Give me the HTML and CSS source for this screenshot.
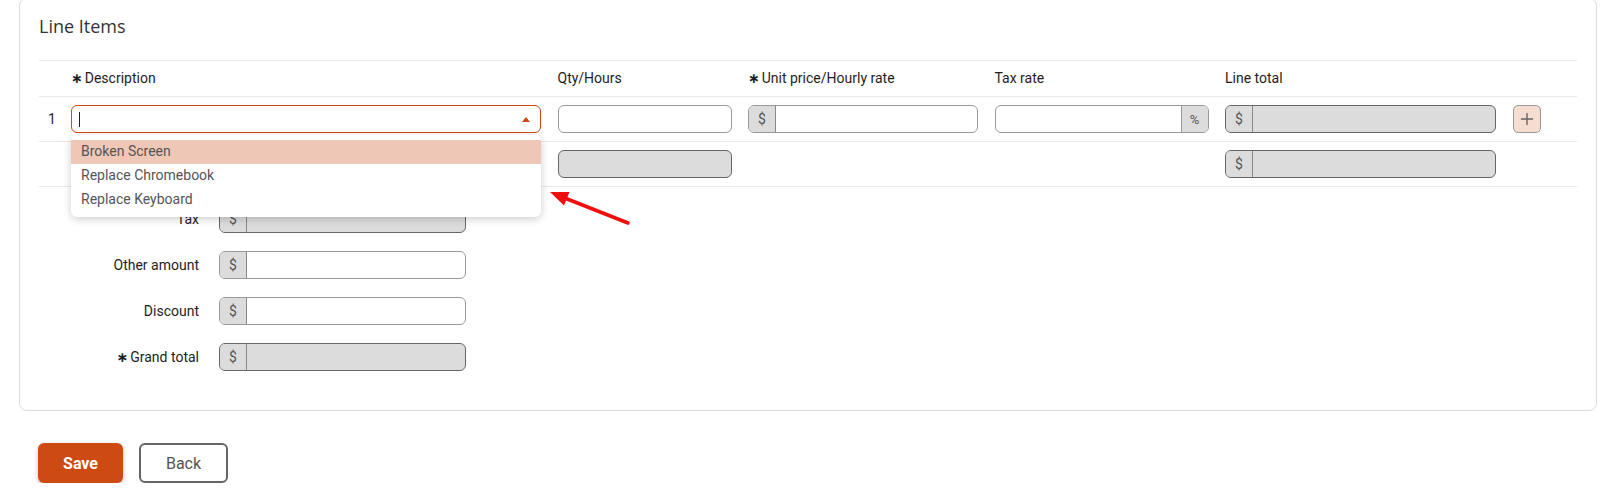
FILE: index.html
```html
<!DOCTYPE html>
<html lang="en">
  <head>
    <meta charset="UTF-8" />
    <meta name="viewport" content="width=device-width, initial-scale=1.0" />
    <title>Line Items</title>

    <link rel="stylesheet" href="styles.css">
  </head>
  <body>
    <main class="page">
      <section class="card">
        <h2 class="card-title">Line Items</h2>

        <div class="items">
          <div class="items-row items-head">
            <span></span>
            <span class="req">Description</span>
            <span>Qty/Hours</span>
            <span class="req">Unit price/Hourly rate</span>
            <span>Tax rate</span>
            <span>Line total</span>
            <span></span>
            <span></span>
          </div>

          <div class="items-row">
            <span class="num">1</span>
            <div class="combo">
              <div class="field field-focus">
                <span class="caret"></span>
                <span class="tri"></span>
              </div>
              <ul class="menu">
                <li class="active">Broken Screen</li>
                <li>Replace Chromebook</li>
                <li>Replace Keyboard</li>
              </ul>
            </div>
            <div class="field"></div>
            <div class="field"><span class="addon">$</span></div>
            <div class="field field-pct"><span class="grow"></span><span class="addon addon-end">%</span></div>
            <div class="field field-ro"><span class="addon">$</span></div>
            <button class="add-btn" type="button">
              <svg width="14" height="14" viewBox="0 0 14 14">
                <path d="M7 1v12M1 7h12" stroke="#666" stroke-width="1.4" fill="none" />
              </svg>
            </button>
            <span></span>
          </div>

          <div class="items-row">
            <span></span>
            <span></span>
            <div class="field field-ro"></div>
            <span></span>
            <span></span>
            <div class="field field-ro"><span class="addon">$</span></div>
            <span></span>
            <span></span>
          </div>
        </div>

        <div class="totals">
          <div class="total-row">
            <span class="total-label">Tax</span>
            <div class="field field-ro"><span class="addon">$</span></div>
          </div>
          <div class="total-row">
            <span class="total-label">Other amount</span>
            <div class="field"><span class="addon">$</span></div>
          </div>
          <div class="total-row">
            <span class="total-label">Discount</span>
            <div class="field"><span class="addon">$</span></div>
          </div>
          <div class="total-row">
            <span class="total-label req">Grand total</span>
            <div class="field field-ro"><span class="addon">$</span></div>
          </div>
        </div>
      </section>

      <div class="actions">
        <button class="btn btn-primary" type="button">Save</button>
        <button class="btn btn-outline" type="button">Back</button>
      </div>

      <svg class="pointer" width="90" height="45" viewBox="0 0 90 45">
        <line x1="83" y1="37" x2="21" y2="12.5" stroke="#f20d0d" stroke-width="3.5" stroke-linecap="round" />
        <polygon points="5,6 24.5,6 19,19.5" fill="#f20d0d" />
      </svg>
    </main>
  </body>
</html>
```

FILE: styles.css
```css
*,
*::before,
*::after {
  box-sizing: border-box;
  margin: 0;
  padding: 0;
}
body {
  font-family: Roboto, "Liberation Sans", sans-serif;
  font-size: 14px;
  color: #1e1e1e;
  background: #fff;
}
.page {
  position: relative;
  padding: 0 5px 0 19px;
}

.card {
  margin-top: -2px;
  border: 1px solid #dcdcdc;
  border-radius: 8px;
  padding: 15px 19px 39px;
}
.card-title {
  font-family: "Open Sans", sans-serif;
  font-size: 18px;
  font-weight: 400;
  line-height: 25px;
  color: #333;
  margin-bottom: 21px;
}

.items-row {
  display: grid;
  grid-template-columns: 15.5px 470px 174px 230px 214px 271px 28px 1fr;
  column-gap: 16.5px;
  align-items: center;
  padding: 8px 0;
  border-bottom: 1px solid #e8e8e8;
}
.items-head {
  border-top: 1px solid #e8e8e8;
  padding: 9px 0;
  line-height: 17px;
}
.req::before {
  content: "\2217";
  font-family: "DejaVu Sans", sans-serif;
  font-weight: 700;
  margin-right: 2px;
}
.num {
  padding-left: 9px;
}

.field {
  display: flex;
  height: 28px;
  border: 1px solid #999;
  border-radius: 6px;
  background: #fff;
  overflow: hidden;
}
.field-ro {
  border-color: #666;
  background: #dcdcdc;
}
.field-focus {
  border-color: #cc4a12;
  align-items: center;
  justify-content: space-between;
  padding: 0 10px 0 7px;
}
.addon {
  width: 27px;
  flex-shrink: 0;
  display: flex;
  align-items: center;
  justify-content: center;
  background: #dcdcdc;
  border-right: 1px solid #888;
  color: #555;
  font-size: 14px;
}
.addon-end {
  border-right: 0;
  border-left: 1px solid #999;
  font-size: 13px;
}
.grow {
  flex: 1;
}
.caret {
  width: 1px;
  height: 15px;
  background: #222;
}
.tri {
  width: 0;
  height: 0;
  border-left: 4.5px solid transparent;
  border-right: 4.5px solid transparent;
  border-bottom: 5px solid #cc4a12;
}

.combo {
  position: relative;
}
.menu {
  position: absolute;
  top: calc(100% + 2px);
  left: 0;
  right: 0;
  z-index: 2;
  list-style: none;
  padding: 5px 0;
  background: #fff;
  border-radius: 6px;
  box-shadow: 0 2px 8px rgba(0, 0, 0, 0.2);
}
.menu li {
  height: 24px;
  line-height: 23px;
  padding: 0 10px;
  color: #555;
}
.menu li.active {
  background: #efc7b6;
}

.add-btn {
  width: 28px;
  height: 28px;
  border: 1px solid #999;
  border-radius: 5px;
  background: #f6ddd2;
  display: flex;
  align-items: center;
  justify-content: center;
}

.totals {
  display: flex;
  flex-direction: column;
  gap: 18px;
  margin-top: 18px;
}
.total-row {
  display: grid;
  grid-template-columns: 160px 247px;
  column-gap: 20px;
  align-items: center;
}
.total-label {
  text-align: right;
}

.actions {
  display: flex;
  gap: 16px;
  margin-top: 32px;
  padding-left: 19px;
}
.btn {
  height: 40px;
  border-radius: 6px;
  font-family: Roboto, sans-serif;
  font-size: 16px;
  cursor: pointer;
}
.btn-primary {
  width: 85px;
  border: 0;
  background: #cd4b13;
  color: #fff;
  font-weight: 700;
  box-shadow: 0 2px 4px rgba(0, 0, 0, 0.25);
}
.btn-outline {
  width: 89px;
  border: 2px solid #666;
  background: #fff;
  color: #555;
}

.pointer {
  position: absolute;
  left: 545px;
  top: 188px;
}
```
